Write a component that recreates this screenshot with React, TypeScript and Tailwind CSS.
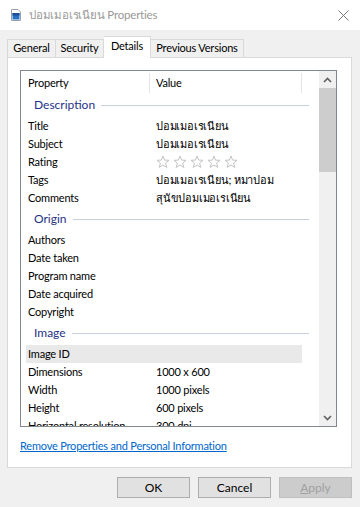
import React from 'react'

type Row = { label: string; value?: string; stars?: boolean; selected?: boolean }
type Group = { title: string; rows: Row[] }

const THAI_TITLE = 'ปอมเมอเรเนียน'

const groups: Group[] = [
  {
    title: 'Description',
    rows: [
      { label: 'Title', value: THAI_TITLE },
      { label: 'Subject', value: THAI_TITLE },
      { label: 'Rating', stars: true },
      { label: 'Tags', value: 'ปอมเมอเรเนียน; หมาปอม' },
      { label: 'Comments', value: 'สุนัขปอมเมอเรเนียน' },
    ],
  },
  {
    title: 'Origin',
    rows: [
      { label: 'Authors' },
      { label: 'Date taken' },
      { label: 'Program name' },
      { label: 'Date acquired' },
      { label: 'Copyright' },
    ],
  },
  {
    title: 'Image',
    rows: [
      { label: 'Image ID', selected: true },
      { label: 'Dimensions', value: '1000 x 600' },
      { label: 'Width', value: '1000 pixels' },
      { label: 'Height', value: '600 pixels' },
      { label: 'Horizontal resolution', value: '300 dpi' },
    ],
  },
]

function Star() {
  return (
    <svg width="14" height="14" viewBox="0 0 14 14" className="shrink-0">
      <path
        d="M7 1 L8.6 5.1 L13 5.3 L9.6 8.1 L10.8 12.4 L7 10 L3.2 12.4 L4.4 8.1 L1 5.3 L5.4 5.1 Z"
        fill="none"
        stroke="#c4c4c4"
        strokeWidth="1"
        strokeLinejoin="round"
      />
    </svg>
  )
}

function Chevron({ down }: { down?: boolean }) {
  return (
    <svg width="9" height="6" viewBox="0 0 9 6">
      <path
        d={down ? 'M1 1 L4.5 4.5 L8 1' : 'M1 5 L4.5 1.5 L8 5'}
        fill="none"
        stroke="#606060"
        strokeWidth="1.6"
      />
    </svg>
  )
}

function PropRow({ row }: { row: Row }) {
  return (
    <div
      className={
        'ml-[5px] w-[276px] h-[18px] flex items-center shrink-0 ' +
        (row.selected ? 'bg-[#e9e9e9]' : '')
      }
    >
      <div className="w-[124px] pl-[2px] whitespace-nowrap">{row.label}</div>
      <div className="pl-[6px] whitespace-nowrap flex items-center gap-[3px]">
        {row.stars ? (
          <>
            <Star />
            <Star />
            <Star />
            <Star />
            <Star />
          </>
        ) : (
          row.value
        )}
      </div>
    </div>
  )
}

export default function App() {
  return (
    <div className="w-[360px] h-[507px] bg-[#f0f0f0] text-[11px] tracking-[-0.2px] text-black font-['Lato','Liberation_Sans','Noto_Sans','DejaVu_Sans',sans-serif] overflow-hidden">
      {/* Title bar */}
      <div className="h-[30px] bg-white flex items-center pl-[11px] pr-[10px]">
        <svg width="10" height="12" viewBox="0 0 10 12" className="shrink-0">
          <path d="M0.5 0.5 H7 L9.5 3 V11.5 H0.5 Z" fill="#fff" stroke="#9aa4b0" />
          <rect x="1.5" y="4" width="7" height="6.5" fill="#2a6fc0" />
          <rect x="1.5" y="4" width="7" height="2.5" fill="#1b4f96" />
        </svg>
        <span className="ml-[8px] text-[11.5px] text-[#999]">{THAI_TITLE} Properties</span>
        <svg width="11" height="11" viewBox="0 0 11 11" className="ml-auto mr-[1px]">
          <path d="M0.5 0.5 L10.5 10.5 M10.5 0.5 L0.5 10.5" stroke="#777" strokeWidth="1" />
        </svg>
      </div>

      {/* Tabs */}
      <div className="mt-[6px] pl-[7px] flex items-end h-[21px] relative z-10 whitespace-nowrap">
        <div className="w-[49px] h-[18px] border border-b-0 border-[#d9d9d9] flex items-center justify-center">
          General
        </div>
        <div className="w-[48px] h-[18px] border border-b-0 border-l-0 border-[#d9d9d9] flex items-center justify-center">
          Security
        </div>
        <div className="w-[47px] h-[22px] -mb-px bg-white border border-b-0 border-l-0 border-[#d9d9d9] flex items-center justify-center pb-[3px]">
          Details
        </div>
        <div className="w-[93px] h-[18px] border border-b-0 border-l-0 border-[#d9d9d9] flex items-center justify-center">
          Previous Versions
        </div>
      </div>

      {/* Tab panel */}
      <div className="ml-[7px] w-[345px] h-[411px] bg-white border border-[#d9d9d9] pt-[12px] pl-[12px]">
        <div className="w-[317px] h-[357px] border border-[#828790] flex overflow-hidden">
          <div className="flex-1 flex flex-col overflow-hidden">
            {/* Column header */}
            <div className="h-[22px] shrink-0 flex items-center ml-[5px] w-[276px] pt-[2px]">
              <div className="w-[124px] pl-[2px] border-r border-[#e5e5e5] h-full flex items-center">Property</div>
              <div className="flex-1 pl-[6px] border-r border-[#e5e5e5] h-full flex items-center">Value</div>
            </div>
            {groups.map((g) => (
              <div key={g.title} className="flex flex-col shrink-0">
                <div className="h-[24px] flex items-center pl-[13px] pr-[10px] shrink-0">
                  <span className="text-[12px] tracking-normal text-[#1e3287]">{g.title}</span>
                  <div className="flex-1 h-px bg-[#c8d0dc] ml-[6px]" />
                </div>
                {g.rows.map((r) => (
                  <PropRow key={r.label} row={r} />
                ))}
              </div>
            ))}
          </div>
          {/* Scrollbar */}
          <div className="w-[17px] bg-[#f0f0f0] flex flex-col shrink-0">
            <div className="h-[17px] flex items-center justify-center">
              <Chevron />
            </div>
            <div className="h-[84px] bg-[#cdcdcd]" />
            <div className="flex-1" />
            <div className="h-[17px] flex items-center justify-center">
              <Chevron down />
            </div>
          </div>
        </div>
        <div className="mt-[11px] text-[#0066cc] underline leading-[16px]">
          Remove Properties and Personal Information
        </div>
      </div>

      {/* Buttons */}
      <div className="mt-[9px] flex justify-end gap-[8px] pr-[8px] text-[12px] tracking-normal">
        <button className="w-[73px] h-[21px] bg-[#e1e1e1] border border-[#adadad]">OK</button>
        <button className="w-[73px] h-[21px] bg-[#e1e1e1] border border-[#adadad]">Cancel</button>
        <button className="w-[73px] h-[21px] bg-[#cccccc] border border-[#bfbfbf] text-[#a0a0a0]">
          <span className="underline">A</span>pply
        </button>
      </div>
    </div>
  )
}
